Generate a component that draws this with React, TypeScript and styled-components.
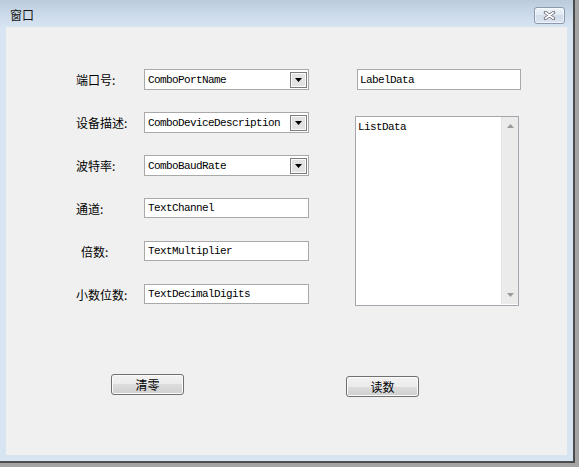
import React from 'react';
import styled, { createGlobalStyle } from 'styled-components';

const GlobalStyle = createGlobalStyle`
  html, body { margin: 0; padding: 0; background: #a4a4a4; overflow: hidden; }
  #root { width: 579px; height: 467px; }
`;

const Window = styled.div`
  width: 573px;
  height: 461px;
  border-right: 2px solid #4c4c4c;
  border-bottom: 2px solid #4c4c4c;
  background: #d7e4f2;
  display: flex;
  flex-direction: column;
`;

const TitleBar = styled.div`
  height: 27px;
  flex: none;
  box-sizing: border-box;
  padding: 0 8px 0 10px;
  display: flex;
  justify-content: space-between;
  align-items: flex-start;
  background: linear-gradient(to bottom, #bccbdc 0%, #c9d8e8 45%, #d7e4f2 100%);
`;

const Title = styled.div`
  margin-top: 8px;
  font-family: "Noto Sans CJK SC", sans-serif;
  font-size: 12px;
  line-height: 14px;
  color: #151515;
`;

const CloseButton = styled.div`
  width: 31px;
  height: 17px;
  margin-top: 7px;
  box-sizing: border-box;
  border: 1px solid #8b98af;
  border-radius: 3px;
  background: linear-gradient(to bottom, #eef3f9 0%, #e0e8f2 50%, #d2dcea 50%, #dce5f0 100%);
  box-shadow: inset 0 0 0 1px rgba(255, 255, 255, 0.55);
  display: flex;
  align-items: center;
  justify-content: center;
`;

const Client = styled.div`
  flex: 1;
  margin: 0 6px 6px;
  box-sizing: border-box;
  padding: 42px 0 0 70px;
  background: #f0f0f0;
`;

const Top = styled.div`
  display: flex;
  align-items: flex-start;
`;

const Form = styled.div`
  display: grid;
  grid-template-columns: 68px 165px;
  grid-auto-rows: 21px;
  row-gap: 22px;
  align-items: start;
`;

const Label = styled.div<{ $indent?: number }>`
  font-family: "Noto Sans CJK SC", sans-serif;
  font-size: 12px;
  line-height: 21px;
  color: #000;
  white-space: nowrap;
  padding-left: ${(p) => p.$indent ?? 0}px;
`;

const FieldText = styled.span`
  font-family: "Liberation Mono", monospace;
  font-size: 11px;
  letter-spacing: -0.6px;
  color: #000;
  white-space: nowrap;
`;

const Combo = styled.div`
  width: 165px;
  height: 21px;
  box-sizing: border-box;
  border: 1px solid #a9a9a9;
  background: #fff;
  padding: 0 1px 0 3px;
  display: flex;
  align-items: center;
  justify-content: space-between;
`;

const DropButton = styled.div`
  width: 17px;
  height: 16px;
  box-sizing: border-box;
  border: 1px solid #7c7c7c;
  box-shadow: inset 0 0 0 1px #fbfbfb;
  background: #e3e3e3;
  display: flex;
  align-items: center;
  justify-content: center;
`;

const TextBox = styled.div`
  width: 165px;
  height: 20px;
  box-sizing: border-box;
  border: 1px solid #a9a9a9;
  background: #fff;
  padding: 0 2px 0 3px;
  display: flex;
  align-items: center;
`;

const RightColumn = styled.div`
  margin-left: 46px;
  width: 166px;
  display: flex;
  flex-direction: column;
  align-items: flex-start;
`;

const LabelBox = styled(TextBox)`
  margin-left: 2px;
  width: 164px;
  height: 21px;
  padding-left: 2px;
`;

const ListBox = styled.div`
  margin-top: 26px;
  width: 164px;
  height: 190px;
  box-sizing: border-box;
  border: 1px solid #a6a6ae;
  background: #fff;
  display: flex;
`;

const ListItems = styled.div`
  flex: 1;
  padding: 1px 0 0 2px;
  line-height: 14px;
`;

const ScrollBar = styled.div`
  width: 17px;
  margin-bottom: 1px;
  box-sizing: border-box;
  background: #ebebeb;
  border-left: 1px solid #e3e3e3;
  display: flex;
  flex-direction: column;
  justify-content: space-between;
  align-items: center;
  padding: 7px 0 7px;
`;

const ButtonRow = styled.div`
  margin-top: 68px;
  padding-left: 35px;
  display: flex;
  align-items: flex-start;
  gap: 162px;
`;

const Button = styled.div<{ $offset?: number }>`
  width: 73px;
  height: 21px;
  margin-top: ${(p) => p.$offset ?? 0}px;
  box-sizing: border-box;
  border: 1px solid #707070;
  border-radius: 3px;
  background: linear-gradient(to bottom, #f2f2f2 0%, #ebebeb 50%, #dddddd 50%, #cfcfcf 100%);
  box-shadow: inset 0 0 0 1px #fbfbfb;
  display: flex;
  align-items: center;
  justify-content: center;
  font-family: "Noto Sans CJK SC", sans-serif;
  font-size: 12px;
  color: #000;
`;

const Triangle = ({ up, color }: { up?: boolean; color: string }) => (
  <svg width="7" height="4" viewBox="0 0 7 4">
    <polygon points={up ? '3.5,0 7,4 0,4' : '0,0 7,0 3.5,4'} fill={color} />
  </svg>
);

const CloseGlyph = () => (
  <svg width="13" height="9" viewBox="0 0 13 9">
    <path d="M2.5 1.5 L10.5 7.5 M10.5 1.5 L2.5 7.5" stroke="#6d6d78" strokeWidth="3.4" strokeLinecap="round" />
    <path d="M2.5 1.5 L10.5 7.5 M10.5 1.5 L2.5 7.5" stroke="#ffffff" strokeWidth="1.6" strokeLinecap="round" />
  </svg>
);

const combos = [
  { label: '端口号:', value: 'ComboPortName' },
  { label: '设备描述:', value: 'ComboDeviceDescription' },
  { label: '波特率:', value: 'ComboBaudRate' },
];

const texts = [
  { label: '通道:', value: 'TextChannel', indent: 0 },
  { label: '倍数:', value: 'TextMultiplier', indent: 5 },
  { label: '小数位数:', value: 'TextDecimalDigits', indent: 0 },
];

export default function App() {
  return (
    <>
      <GlobalStyle />
      <Window>
        <TitleBar>
          <Title>窗口</Title>
          <CloseButton>
            <CloseGlyph />
          </CloseButton>
        </TitleBar>
        <Client>
          <Top>
            <Form>
              {combos.map((c) => (
                <React.Fragment key={c.value}>
                  <Label>{c.label}</Label>
                  <Combo>
                    <FieldText>{c.value}</FieldText>
                    <DropButton>
                      <Triangle color="#000" />
                    </DropButton>
                  </Combo>
                </React.Fragment>
              ))}
              {texts.map((t) => (
                <React.Fragment key={t.value}>
                  <Label $indent={t.indent}>{t.label}</Label>
                  <TextBox>
                    <FieldText>{t.value}</FieldText>
                  </TextBox>
                </React.Fragment>
              ))}
            </Form>
            <RightColumn>
              <LabelBox>
                <FieldText>LabelData</FieldText>
              </LabelBox>
              <ListBox>
                <ListItems>
                  <FieldText>ListData</FieldText>
                </ListItems>
                <ScrollBar>
                  <Triangle up color="#9a9a9a" />
                  <Triangle color="#9a9a9a" />
                </ScrollBar>
              </ListBox>
            </RightColumn>
          </Top>
          <ButtonRow>
            <Button>清零</Button>
            <Button $offset={2}>读数</Button>
          </ButtonRow>
        </Client>
      </Window>
    </>
  );
}
